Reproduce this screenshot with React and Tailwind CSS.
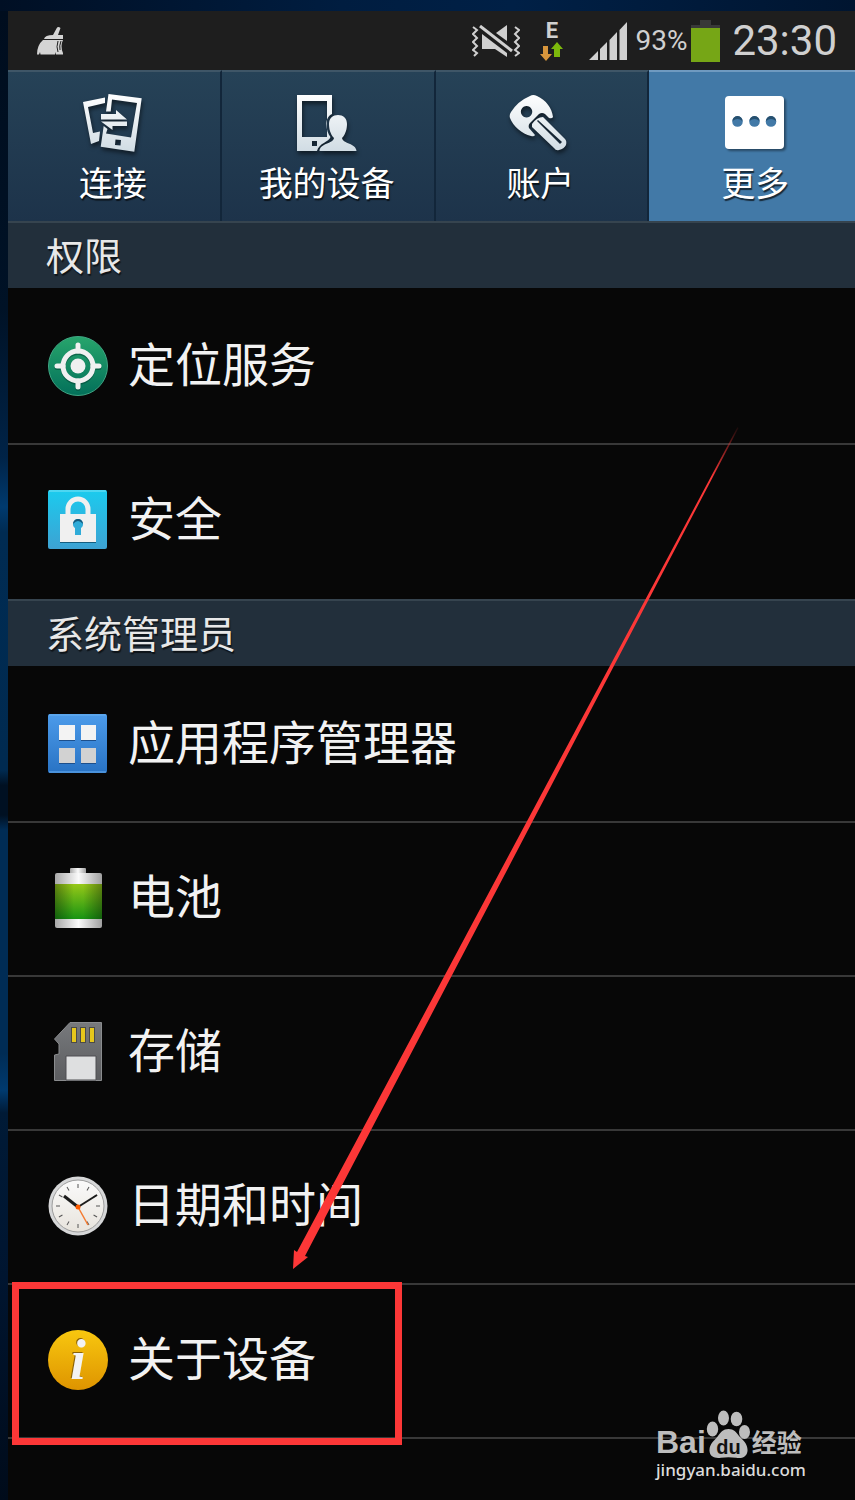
const TABS = [
  { id: 'connections', label: '连接', Icon: ConnectionsIcon },
  { id: 'device', label: '我的设备', Icon: DeviceIcon },
  { id: 'accounts', label: '账户', Icon: KeyIcon },
  { id: 'more', label: '更多', Icon: MoreIcon },
]

const SECTIONS = [
  {
    title: '权限',
    items: [
      { label: '定位服务', Icon: LocationIcon },
      { label: '安全', Icon: LockIcon },
    ],
  },
  {
    title: '系统管理员',
    items: [
      { label: '应用程序管理器', Icon: AppsIcon },
      { label: '电池', Icon: BatteryIcon },
      { label: '存储', Icon: SdCardIcon },
      { label: '日期和时间', Icon: ClockIcon },
      { label: '关于设备', Icon: InfoIcon, marked: true },
    ],
  },
]

export default function App() {
  return (
    <div className="relative min-h-screen overflow-hidden bg-[linear-gradient(90deg,#000f24,#001d40_40%,#002046_60%,#001530)] pt-[11px] font-['Roboto','Noto_Sans_CJK_SC',sans-serif]">
      <div className="bg-[linear-gradient(180deg,#000d1e,#001226_20%,#002347_30%,#003a6e_33.3%,#002b52_35%,#002a50_51%,#001022_52%,#001022_54%,#002c55_55%,#002c55_70%,#003a6e_72.5%,#001a36_74%,#001530_85%,#000b1a)] pl-2">
        <div className="flex min-h-[calc(100vh-11px)] flex-col bg-[#070707]">
          <StatusBar />
          <TabBar />
          <main className="flex-1">
            {SECTIONS.map(section => (
              <Section key={section.title} {...section} />
            ))}
            <div className="h-[61px] border-t-2 border-[#383838]" />
          </main>
        </div>
      </div>

      <Arrow />
      <Watermark />
    </div>
  )
}

function StatusBar() {
  return (
    <header className="flex h-[59px] items-center bg-[#1e1e1e] pr-[18px] pl-7 text-[#d0d0d0]">
      <BroomIcon />
      <div className="ml-auto flex items-center">
        <MuteIcon />
        <div className="ml-5 flex flex-col items-center">
          <span className="text-[22px] leading-[22px] font-bold">E</span>
          <svg viewBox="0 0 23 19" className="h-[19px] w-[23px]">
            <path d="M3 4h5v8h4l-6 7-6-7h3z" fill="#d8963c" />
            <path d="M14 15h6V7h3l-6-7-6 7h3z" fill="#7cb80c" />
          </svg>
        </div>
        <svg viewBox="0 0 38 38" className="ml-[26px] h-[38px] w-[38px]" fill="currentColor">
          <path d="M0 38L9 29V38zM11 38V27L18 20V38zM20.500 38V18L28 10V38zM30.500 38V8L38 0V38z" />
        </svg>
        <span className="ml-2 text-[28px] leading-8">93%</span>
        <svg viewBox="0 0 29 42" className="ml-1 h-[42px] w-[29px]">
          <path d="M9 0h11v5h9v3H0V5h9z" fill="#383838" />
          <path d="M0 8h29v34H0z" fill="#76a616" />
        </svg>
        <span className="ml-3 text-[42px] leading-10">23:30</span>
      </div>
    </header>
  )
}

function TabBar() {
  return (
    <nav className="-mr-2 flex h-[151px]">
      {TABS.map(({ id, label, Icon }) => (
        <button
          key={id}
          type="button"
          className={`flex w-1/4 flex-col items-center gap-[11px] border-t-2 pt-[21px] pr-0.5 text-[34px] leading-10 text-white [text-shadow:1px_2px_1px_#000a]
            ${id === 'more'
              ? 'border-t-[#6f9ac0] bg-[#4279a7]'
              : 'border-r-2 border-t-[#3f5667] border-r-[#12263a] bg-linear-to-b from-[#264257] to-[#1d334a]'}`}
        >
          <Icon />
          {label}
        </button>
      ))}
    </nav>
  )
}

function Section({ title, items }) {
  return (
    <section className="pb-0.5 last-of-type:pb-0">
      <h2 className="h-[68px] border-t-2 border-b border-t-[#36444f] border-b-[#070707] bg-[#222f3b] pl-[38px] text-[38px] leading-[68px] font-normal text-[#e8e8e8] [text-shadow:1px_2px_1px_#0009]">
        {title}
      </h2>
      <ul>
        {items.map(item => (
          <SettingRow key={item.label} {...item} />
        ))}
      </ul>
    </section>
  )
}

function SettingRow({ label, Icon, marked }) {
  return (
    <li className="relative border-t-2 border-[#383838] first:border-[#070707]">
      <a href="#" className="flex h-[152px] items-center gap-5 pb-0.5 pl-10 text-[47px] leading-[60px] text-[#f2f2f2]">
        <Icon />
        {label}
      </a>
      {marked && (
        <div className="absolute -top-[3px] left-1 h-[163px] w-[390px] border-[7px] border-[#fc3737]" />
      )}
    </li>
  )
}

/* Annotation arrow, tapering out at the tail */
function Arrow() {
  return (
    <svg viewBox="0 0 446 842" className="pointer-events-none absolute top-[427px] left-[293px] h-[842px] w-[446px]">
      <defs>
        <linearGradient id="arrow" gradientUnits="userSpaceOnUse" x1="446" y1="-4" x2="418" y2="50">
          <stop offset="0" stopColor="#fc3737" stopOpacity="0" />
          <stop offset="1" stopColor="#fc3737" />
        </linearGradient>
      </defs>
      <path d="M444.500 0L4 825L1 823L0 842L15 830L12 829L445.500 1Z" fill="url(#arrow)" />
    </svg>
  )
}

function Watermark() {
  return (
    <div className="absolute right-[49px] bottom-[18px] w-[150px] text-[#bdbdbd]">
      <div className="flex items-end">
        <span className="font-['Liberation_Sans',sans-serif] text-[32px] leading-8 font-bold">Bai</span>
        <svg viewBox="0 0 44 48" className="h-12 w-11 shrink-0" fill="currentColor">
          <ellipse cx="6.500" cy="19" rx="5.700" ry="7.500" />
          <ellipse cx="17.500" cy="8" rx="5.500" ry="7.500" />
          <ellipse cx="30.500" cy="9" rx="5.800" ry="7.300" />
          <ellipse cx="38.500" cy="22" rx="5.500" ry="7" />
          <path d="M22.500 19C28 19 30 22 33 26C37 30 42 34 41.500 41C40.500 48 35 48.500 30 47.700C25 47 20 47 15 47.700C9 48.500 4 47 3.500 41C3 34 9 30 12 26C15 22 17 19 22.500 19Z" />
          <text x="22.500" y="44" textAnchor="middle" fill="#111" fontSize="20" fontWeight="700" fontFamily="Liberation Sans, sans-serif">du</text>
        </svg>
        <span className="ml-0.5 text-[25px] leading-7 font-bold whitespace-nowrap">经验</span>
      </div>
      <div className="font-['Noto_Sans',sans-serif] text-[17px] leading-6 font-medium text-[#dcdcdc]">jingyan.baidu.com</div>
    </div>
  )
}

/* Status bar icons */

function BroomIcon() {
  return (
    <svg viewBox="0 0 30 30" className="h-[30px] w-[30px]" fill="#d4d4d4">
      <path d="M20.500 2.500Q22 0 24.500 2L22 9H27V13H8Q9 9 17 9ZM7 14H27Q24 20 27 27V28.500H20L19 26V28.500H4.500L4 26L3 28.500H1Q1 19 7 14Z" />
      <path d="M22 15q-2 6 0 11M25 15q-2 5-1 9" stroke="#1e1e1e" fill="none" />
    </svg>
  )
}

function MuteIcon() {
  return (
    <svg viewBox="0 0 48 32" className="h-8 w-12" fill="currentColor">
      <path d="M24 8L35 0V16zM10 9L35 28V32L23 24H10z" />
      <path d="M8 1L40 26" stroke="#1e1e1e" strokeWidth="6" />
      <path d="M8 1L40 26" stroke="currentColor" strokeWidth="3" />
      <path d="M1 2l4 3-4 4 4 4-4 4 4 4-4 4 4 3-3 3M43 2l4 3-4 4 4 4-4 4 4 4-4 4 4 3-4 3" fill="none" stroke="currentColor" strokeWidth="2" />
    </svg>
  )
}

/* Tab icons */

function TabGlyph({ name, children }) {
  return (
    <svg viewBox="0 0 60 60" className="h-[60px] w-[60px] overflow-visible drop-shadow-[1px_3px_2px_#0008]">
      <defs>
        <linearGradient id={name} gradientUnits="userSpaceOnUse" x1="0" y1="0" x2="0" y2="60">
          <stop offset="0" stopColor="#fff" />
          <stop offset="1" stopColor="#cfdbe3" />
        </linearGradient>
      </defs>
      <g fill={`url(#${name})`} fillRule="evenodd">{children}</g>
    </svg>
  )
}

function ConnectionsIcon() {
  return (
    <TabGlyph name="tab-connections">
      <path d="M0 9L22 4.500V10L5 14L10 40L17 38.500L16 48L8 51Z" />
      <path d="M25.500 1L58.700 5.300L51.300 58.700L17.700 53.700L20.700 33L24.500 36L23 40.500L48 44.500L54 10L29 6.500L27.700 18.500H23ZM32.500 46.500L38 47L37.500 52.500L32 52Z" />
      <path d="M18 21H33V17L44 26.500H18ZM44 28.500H18L29.500 37V33H44Z" />
    </TabGlyph>
  )
}

function DeviceIcon() {
  return (
    <TabGlyph name="tab-device">
      <path d="M0 2H35V21C31 23 29 27 29.500 32C29.500 36 31 41 33.500 44C32 49 22 50 20 58H0ZM5 8V44H30V8ZM15 48V53H20V48Z" />
      <path d="M22.500 58C23 50 36 51 37 45C33 41 32 35 32 31C32 25 36 22 41 22C46 22 50 25 50 31C50 35 49 41 45 45C46 51 59 50 59.500 58Z" />
    </TabGlyph>
  )
}

function KeyIcon() {
  return (
    <TabGlyph name="tab-key">
      <path d="M20 3Q23 1 27 3C36 7 42 15 43 24Q42 26 39 25L35 21Q32 19 29 21L20 30Q18 32 19 35L25 42Q24 44 21 43C12 41 3 33 0 25Q-1 22 1 19Q8 8 20 3ZM16.500 13A5.700 5.700 0 1 0 16.600 13Z" />
      <path d="M22 31Q27 24 33 24L55 46Q57 48 56 52Q54 56 49 57Q46 58 44 55L22 34ZM28 27L27 28L50 51L52 49Z" />
    </TabGlyph>
  )
}

function MoreIcon() {
  return (
    <svg viewBox="0 0 60 60" className="h-[60px] w-[60px] overflow-visible drop-shadow-[2px_2px_1px_#0006]">
      <rect y="3" width="59" height="53" rx="4" fill="#fff" />
      <g fill="#4279a7">
        <circle cx="12.500" cy="28.500" r="5.300" />
        <circle cx="29.500" cy="28.500" r="5.300" />
        <circle cx="46" cy="28.500" r="5.300" />
      </g>
      <path d="M7.500 28a5 5 0 0 1 10 0q-5-4-10 0M24.500 28a5 5 0 0 1 10 0q-5-4-10 0M41 28a5 5 0 0 1 10 0q-5-4-10 0" fill="#26506f" />
    </svg>
  )
}

/* Setting icons */

function RowGlyph({ name, from, to, children }) {
  return (
    <svg viewBox="0 0 60 60" className="h-[60px] w-[60px] shrink-0 overflow-visible">
      <defs>
        <linearGradient id={name} x1="0" y1="0" x2="0" y2="1">
          <stop offset="0" stopColor={from} />
          <stop offset="1" stopColor={to} />
        </linearGradient>
      </defs>
      {children}
    </svg>
  )
}

function LocationIcon() {
  return (
    <RowGlyph name="location" from="#27a56c" to="#03705a">
      <circle cx="30" cy="30" r="29.500" fill="url(#location)" stroke="#3fa583" />
      <g fill="none" stroke="#064a38" strokeWidth="5" strokeLinecap="round" opacity=".6" transform="translate(0 1.500)">
        <circle cx="30" cy="30" r="15" />
        <path d="M30 9v6M30 45v6M9 30h6M45 30h6" />
      </g>
      <g fill="none" stroke="#f0f0f0" strokeWidth="5" strokeLinecap="round">
        <circle cx="30" cy="30" r="15" />
        <path d="M30 9v6M30 45v6M9 30h6M45 30h6" />
      </g>
      <circle cx="30" cy="30" r="7.500" fill="#f0f0f0" />
    </RowGlyph>
  )
}

function LockIcon() {
  return (
    <RowGlyph name="lock" from="#1bcbee" to="#3da2d3">
      <rect width="59" height="59" rx="2" fill="url(#lock)" />
      <path d="M1 1h57" stroke="#7fe2f6" />
      <path d="M12 25h36v28H12z" fill="#155e80" />
      <path d="M20 26V19a10 10 0 0 1 20 0v7" fill="none" stroke="#f0f0f0" strokeWidth="5" />
      <path d="M12 24h36v28H12z" fill="#f0f0f0" />
      <path d="M30 29a5 5 0 0 1 3 9v7h-6v-7a5 5 0 0 1 3-9" fill="#2fabd8" />
      <path d="M25 34a5 5 0 0 1 10 0q-5-6-10 0" fill="#14597c" />
    </RowGlyph>
  )
}

function AppsIcon() {
  return (
    <RowGlyph name="apps" from="#4c9bea" to="#2973c4">
      <rect width="59" height="59" rx="2" fill="url(#apps)" />
      <path d="M1 1h57M1 58h57" stroke="#6bb0f2" />
      <path d="M11 13h16v14H11zM33 13h15v14H33zM11 36h16v14H11zM33 36h15v14H33z" fill="#1c4f8c" />
      <path d="M11 11h16v15H11zM33 11h15v15H33z" fill="#f3f3f3" />
      <path d="M11 34h16v15H11zM33 34h15v15H33z" fill="#d2d2d2" />
    </RowGlyph>
  )
}

function BatteryIcon() {
  return (
    <RowGlyph name="battery" from="#97c818" to="#189413">
      <defs>
        <linearGradient id="battery-metal">
          <stop offset="0" stopColor="#a8a8a8" />
          <stop offset=".5" stopColor="#fafafa" />
          <stop offset="1" stopColor="#a0a0a0" />
        </linearGradient>
        <linearGradient id="battery-shade">
          <stop offset="0" stopColor="#000" stopOpacity=".35" />
          <stop offset=".4" stopColor="#000" stopOpacity="0" />
          <stop offset=".6" stopColor="#000" stopOpacity="0" />
          <stop offset="1" stopColor="#000" stopOpacity=".35" />
        </linearGradient>
      </defs>
      <rect x="22" width="16" height="7" rx="1" fill="url(#battery-metal)" />
      <rect x="7" y="5" width="47" height="55" rx="2" fill="url(#battery-metal)" />
      <path d="M7 16h47v35H7z" fill="url(#battery)" />
      <path d="M7 16h47v35H7z" fill="url(#battery-shade)" />
    </RowGlyph>
  )
}

function SdCardIcon() {
  return (
    <RowGlyph name="sd" from="#77797c" to="#5c5d60">
      <path d="M22 .5H53.500V58.500H6.500V33L11 32V22L6.500 17Z" fill="url(#sd)" stroke="#8a8c8e" />
      <path d="M23 5h6v16h-6zM32 5h6v16h-6zM41 5h6v16h-6z" fill="#4b4b48" />
      <path d="M24 6h4v14h-4zM33 6h4v14h-4zM42 6h4v14h-4z" fill="#e6c71c" />
      <path d="M18 34h30v24H18z" fill="#dedfe0" stroke="#4e4f52" />
    </RowGlyph>
  )
}

function ClockIcon() {
  const ticks = [0, 30, 60, 90, 120, 150, 180, 210, 240, 270, 300, 330]
  return (
    <RowGlyph name="clock" from="#fafafa" to="#e8e4dd">
      <circle cx="30" cy="30" r="29.500" fill="#d6d7d8" />
      <circle cx="30" cy="30" r="26" fill="url(#clock)" stroke="#9d9d9d" />
      {ticks.map(deg => (
        <path key={deg} d="M30 8v4" stroke="#555" transform={`rotate(${deg} 30 30)`} />
      ))}
      <path d="M30 31L16 20" stroke="#1c1c1c" strokeWidth="3" />
      <path d="M30 31L49 19" stroke="#1c1c1c" strokeWidth="2" />
      <path d="M30 31L40 49" stroke="#f47a30" strokeWidth="1.500" />
      <circle cx="30" cy="31" r="2.500" fill="#ff5c00" />
    </RowGlyph>
  )
}

function InfoIcon() {
  return (
    <RowGlyph name="info" from="#f8c70f" to="#de9400">
      <circle cx="30" cy="30" r="30" fill="url(#info)" />
      <text x="30" y="49" textAnchor="middle" className="fill-[#f3f3f3] font-['Liberation_Serif',serif] text-[56px] italic [text-shadow:-1px_-1px_0_#8a6206]" fontWeight="700">i</text>
    </RowGlyph>
  )
}
